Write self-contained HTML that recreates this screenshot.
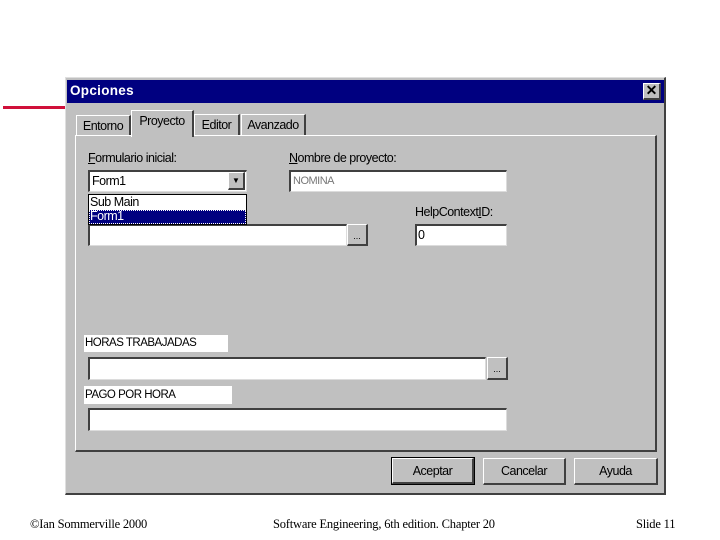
<!DOCTYPE html>
<html><head><meta charset="utf-8"><style>
*{margin:0;padding:0;box-sizing:border-box}
body{width:720px;height:540px;background:#fff;position:relative;overflow:hidden;font-family:"Liberation Sans",sans-serif;font-size:12px;color:#000}
.a{position:absolute}
.sunk{background:#fff;border-top:2px solid #404040;border-left:2px solid #404040;border-right:1px solid #dcdcdc;border-bottom:1px solid #dcdcdc}
.btn{background:#c0c0c0;border-top:1px solid #fff;border-left:1px solid #fff;border-right:2px solid #404040;border-bottom:2px solid #404040;text-align:center}
.t{font-size:12.5px;letter-spacing:-0.5px;white-space:nowrap}
.tab{background:#c0c0c0;border-top:1px solid #fff;border-left:1px solid #fff;border-right:2px solid #404040;padding-top:3px;text-align:center}
.f{font-family:"Liberation Serif",serif;font-size:12.5px;letter-spacing:-0.2px}
</style></head><body>
<div class="a" style="left:3px;top:106px;width:62px;height:3px;background:#d0103a"></div>
<div class="a" style="left:65px;top:77px;width:601px;height:418px;background:#c0c0c0;border-top:1px solid #dfdfdf;border-left:1px solid #dfdfdf;border-right:2px solid #404040;border-bottom:2px solid #404040"></div>
<div class="a" style="left:67px;top:80px;width:597px;height:23px;background:#000080"></div>
<div class="a t" style="left:70px;top:83px;color:#fff;font-weight:bold;font-size:13.5px;letter-spacing:0.3px">Opciones</div>
<div class="a btn" style="left:643px;top:83px;width:18px;height:17px;font-size:14px;line-height:13px;font-weight:bold">✕</div>
<div class="a" style="left:75px;top:135px;width:582px;height:317px;border-top:1px solid #fff;border-left:1px solid #fff;border-right:2px solid #404040;border-bottom:2px solid #404040"></div>
<div class="a tab t" style="left:76px;top:115px;width:55px;height:20px">Entorno</div>
<div class="a tab t" style="left:194px;top:114px;width:46px;height:21px">Editor</div>
<div class="a tab t" style="left:241px;top:114px;width:65px;height:21px">Avanzado</div>
<div class="a tab t" style="left:131px;top:110px;width:63px;height:27px;border-bottom:none">Proyecto</div>
<div class="a t" style="left:88px;top:151px"><u>F</u>ormulario inicial:</div>
<div class="a t" style="left:289px;top:151px"><u>N</u>ombre de proyecto:</div>
<div class="a sunk" style="left:88px;top:170px;width:159px;height:22px"></div>
<div class="a t" style="left:92px;top:174px">Form1</div>
<div class="a btn" style="left:228px;top:172px;width:17px;height:18px;font-size:8px;line-height:16px">▼</div>
<div class="a sunk" style="left:289px;top:170px;width:218px;height:22px"></div>
<div class="a t" style="left:293px;top:175px;font-size:11px;color:#777">NOMINA</div>
<div class="a sunk" style="left:88px;top:224px;width:259px;height:22px"></div>
<div class="a btn" style="left:347px;top:224px;width:21px;height:22px;line-height:22px;font-size:9px">...</div>
<div class="a" style="left:88px;top:194px;width:159px;height:31px;background:#fff;border:1px solid #000"></div>
<div class="a t" style="left:90px;top:195px">Sub Main</div>
<div class="a" style="left:89px;top:210px;width:157px;height:14px;background:#000080;border:1px dotted #fff"></div>
<div class="a t" style="left:90px;top:209px;color:#fff">Form1</div>
<div class="a t" style="left:415px;top:205px">HelpContext<u>I</u>D:</div>
<div class="a sunk" style="left:415px;top:224px;width:92px;height:22px"></div>
<div class="a t" style="left:418px;top:228px">0</div>
<div class="a" style="left:84px;top:335px;width:144px;height:17px;background:#fff"></div>
<div class="a t" style="left:85px;top:337px;font-size:11.5px">HORAS TRABAJADAS</div>
<div class="a sunk" style="left:88px;top:357px;width:398px;height:23px"></div>
<div class="a btn" style="left:487px;top:357px;width:21px;height:23px;line-height:22px;font-size:9px">...</div>
<div class="a" style="left:84px;top:386px;width:148px;height:18px;background:#fff"></div>
<div class="a t" style="left:85px;top:389px;font-size:11.5px">PAGO POR HORA</div>
<div class="a sunk" style="left:88px;top:408px;width:419px;height:23px"></div>
<div class="a" style="left:391px;top:457px;width:84px;height:28px;border:1px solid #000"></div>
<div class="a btn t" style="left:392px;top:458px;width:82px;height:26px;line-height:24px">Aceptar</div>
<div class="a btn t" style="left:483px;top:458px;width:83px;height:27px;line-height:25px">Cancelar</div>
<div class="a btn t" style="left:574px;top:458px;width:84px;height:27px;line-height:25px">Ayuda</div>
<div class="a f" style="left:30px;top:517px">©Ian Sommerville 2000</div>
<div class="a f" style="left:273px;top:517px">Software Engineering, 6th edition. Chapter 20</div>
<div class="a f" style="left:636px;top:517px">Slide 11</div>
</body></html>
